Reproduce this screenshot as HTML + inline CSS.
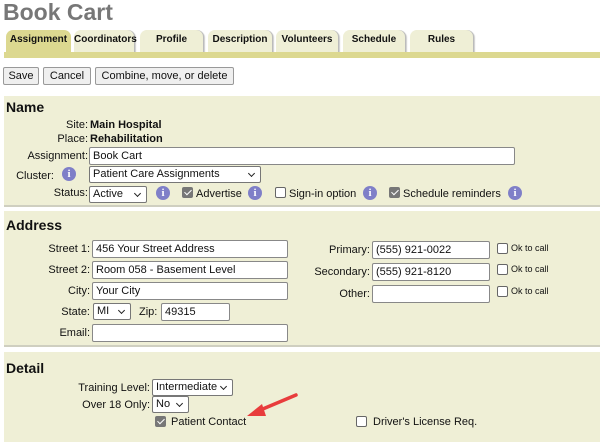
<!DOCTYPE html>
<html><head><meta charset="utf-8"><style>
*{box-sizing:border-box}
body{margin:0;width:600px;height:431px;overflow:hidden;background:#fff;font-family:"Liberation Sans",Arial,sans-serif;font-size:11px;color:#111;position:relative}
.a{position:absolute;white-space:nowrap}
h1{position:absolute;left:3px;top:-1px;margin:0;font-size:23px;color:#777;font-weight:bold}
.tab{position:absolute;top:30px;height:24px;background:#efefd6;border-radius:7px 7px 0 0;box-shadow:1px 0 0 #bbb,2px 1px 1px #ccc;font-weight:bold;font-size:10px;text-align:center;line-height:20px;white-space:nowrap}
.tab.on{background:#dcd890;height:28px;box-shadow:none}
.bar{position:absolute;left:4px;right:0;top:52px;height:6px;background:#dcd890}
.btn{position:absolute;top:67px;height:18px;border:1px solid #999;background:#efefef;border-radius:2px;font-size:11px;line-height:16px;text-align:center;white-space:nowrap}
.pan{position:absolute;left:4px;right:0;background:#efefd6;border-bottom:2px solid #cfcfc0}
.h{position:absolute;left:2px;font-weight:bold;font-size:14px}
.lbl{position:absolute;text-align:right;white-space:nowrap;margin-top:1px}
.in{position:absolute;height:18px;background:#fff;border:1px solid #888;border-radius:2px;padding-left:3px;line-height:16px;white-space:nowrap;font-size:11px}
.sel{position:absolute;height:17px;background:#fff;border:1px solid #777;border-radius:2px;padding-left:3px;line-height:15px;white-space:nowrap;font-size:11px}
.sel:after{content:"";position:absolute;right:6px;top:4px;width:4px;height:4px;border-right:1.5px solid #222;border-bottom:1.5px solid #222;transform:rotate(45deg)}
.info{position:absolute;width:14px;height:14px;border-radius:50%;background:#7f7fc8;color:#fff;font-weight:bold;font-size:11px;text-align:center;line-height:14px;font-family:"Liberation Serif",serif}
.cb{position:absolute;width:11px;height:11px;border:1px solid #666;border-radius:2px;background:#fff}
.cb.on{background:#777;border-color:#777}
.cb.on:after{content:"";position:absolute;left:3px;top:0px;width:3px;height:6px;border-right:1.5px solid #fff;border-bottom:1.5px solid #fff;transform:rotate(45deg)}
.sm{font-size:9px}
</style></head><body>
<h1>Book Cart</h1>
<div class="tab on" style="left:6px;width:65px">Assignment</div>
<div class="tab" style="left:74px;width:60px">Coordinators</div>
<div class="tab" style="left:140px;width:63px">Profile</div>
<div class="tab" style="left:208px;width:64px">Description</div>
<div class="tab" style="left:276px;width:62px">Volunteers</div>
<div class="tab" style="left:343px;width:62px">Schedule</div>
<div class="tab" style="left:410px;width:63px">Rules</div>
<div class="bar"></div>
<div class="btn" style="left:3px;width:36px">Save</div>
<div class="btn" style="left:43px;width:48px">Cancel</div>
<div class="btn" style="left:95px;width:139px">Combine, move, or delete</div>

<div class="pan" style="top:96px;height:111px">
<div class="h" style="top:3px">Name</div>
</div>
<div class="lbl" style="right:512px;top:118px">Site:</div><div class="a" style="left:90px;top:119px;font-weight:bold">Main Hospital</div>
<div class="lbl" style="right:512px;top:132px">Place:</div><div class="a" style="left:90px;top:133px;font-weight:bold">Rehabilitation</div>
<div class="lbl" style="right:512px;top:149px">Assignment:</div><div class="in" style="left:89px;top:147px;width:426px">Book Cart</div>
<div class="lbl" style="right:546px;top:169px">Cluster:</div><div class="info" style="left:62px;top:167px">i</div>
<div class="sel" style="left:89px;top:166px;width:172px">Patient Care Assignments</div>
<div class="lbl" style="right:512px;top:186px">Status:</div>
<div class="sel" style="left:89px;top:186px;width:58px">Active</div>
<div class="info" style="left:156px;top:186px">i</div>
<div class="cb on" style="left:182px;top:187px"></div><div class="a" style="left:196px;top:188px">Advertise</div>
<div class="info" style="left:248px;top:186px">i</div>
<div class="cb" style="left:275px;top:187px"></div><div class="a" style="left:289px;top:188px">Sign-in option</div>
<div class="info" style="left:363px;top:186px">i</div>
<div class="cb on" style="left:389px;top:187px"></div><div class="a" style="left:403px;top:188px">Schedule reminders</div>
<div class="info" style="left:508px;top:186px">i</div>

<div class="pan" style="top:211px;height:136px">
<div class="h" style="top:6px">Address</div>
</div>
<div class="lbl" style="right:510px;top:242px">Street 1:</div><div class="in" style="left:92px;top:240px;width:196px">456 Your Street Address</div>
<div class="lbl" style="right:510px;top:263px">Street 2:</div><div class="in" style="left:92px;top:261px;width:196px">Room 058 - Basement Level</div>
<div class="lbl" style="right:510px;top:284px">City:</div><div class="in" style="left:92px;top:282px;width:196px">Your City</div>
<div class="lbl" style="right:510px;top:305px">State:</div><div class="sel" style="left:93px;top:303px;width:38px">MI</div>
<div class="a" style="left:139px;top:306px">Zip:</div><div class="in" style="left:161px;top:303px;width:69px">49315</div>
<div class="lbl" style="right:510px;top:326px">Email:</div><div class="in" style="left:92px;top:324px;width:196px"></div>
<div class="lbl" style="right:230px;top:243px">Primary:</div><div class="in" style="left:372px;top:241px;width:118px">(555) 921-0022</div>
<div class="lbl" style="right:230px;top:265px">Secondary:</div><div class="in" style="left:372px;top:263px;width:118px">(555) 921-8120</div>
<div class="lbl" style="right:230px;top:287px">Other:</div><div class="in" style="left:372px;top:285px;width:118px"></div>
<div class="cb" style="left:497px;top:243px"></div><div class="a sm" style="left:511px;top:243px">Ok to call</div>
<div class="cb" style="left:497px;top:264px"></div><div class="a sm" style="left:511px;top:264px">Ok to call</div>
<div class="cb" style="left:497px;top:286px"></div><div class="a sm" style="left:511px;top:286px">Ok to call</div>

<div class="pan" style="top:352px;height:90px;border:none">
<div class="h" style="top:8px">Detail</div>
</div>
<div class="lbl" style="right:450px;top:381px">Training Level:</div><div class="sel" style="left:152px;top:379px;width:81px">Intermediate</div>
<div class="lbl" style="right:450px;top:398px">Over 18 Only:</div><div class="sel" style="left:152px;top:396px;width:37px">No</div>
<div class="cb on" style="left:155px;top:416px"></div><div class="a" style="left:171px;top:416px">Patient Contact</div>
<div class="cb" style="left:356px;top:416px"></div><div class="a" style="left:373px;top:416px">Driver's License Req.</div>
<svg class="a" style="left:0;top:0" width="600" height="431"><line x1="296" y1="395" x2="258" y2="411" stroke="#e83c3c" stroke-width="3.5" stroke-linecap="round"/><polygon points="247,416 262,404 266,416" fill="#e83c3c"/></svg>
</body></html>
